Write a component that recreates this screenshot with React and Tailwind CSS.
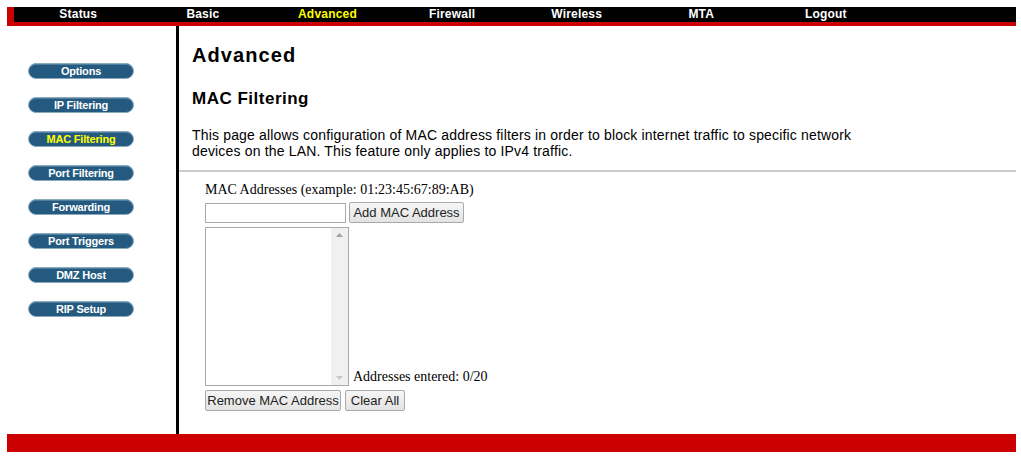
import React from "react";

const navItems = ["Status", "Basic", "Advanced", "Firewall", "Wireless", "MTA", "Logout"];
const sideItems = [
  "Options",
  "IP Filtering",
  "MAC Filtering",
  "Port Filtering",
  "Forwarding",
  "Port Triggers",
  "DMZ Host",
  "RIP Setup",
];

const SideButton = ({ label, active }) => (
  <div className="w-[106px] h-[16px] rounded-full bg-[#245a80] border border-[#8aa9bd] shadow-[inset_0_1px_0_#4f7d9c] flex items-center justify-center">
    <span
      className={`text-[11px] font-bold leading-none tracking-[-0.2px] ${
        active ? "text-[#ffff00]" : "text-white"
      }`}
    >
      {label}
    </span>
  </div>
);

const GreyButton = ({ children, className = "" }) => (
  <button
    className={`h-[21px] px-0 whitespace-nowrap border border-[#a9a9a9] rounded-[2px] text-[13px] text-[#222] leading-none bg-gradient-to-b from-[#f6f6f6] to-[#e3e3e3] ${className}`}
    style={{ fontFamily: "'Liberation Sans', Arial, sans-serif" }}
  >
    {children}
  </button>
);

export default function App() {
  return (
    <div
      className="w-[1021px] h-[460px] bg-white pl-[7px] pr-[5px] pt-[7px]"
      style={{ fontFamily: "'Liberation Sans', Arial, sans-serif" }}
    >
      {/* top nav */}
      <div className="h-[19px] bg-[#cc0000] pl-[7px] pb-[4px]">
        <div className="h-[15px] bg-black flex pl-[2px]">
          {navItems.map((item) => (
            <div
              key={item}
              className={`w-[124.6px] text-center text-[12px] font-bold leading-[15px] tracking-[0.2px] ${
                item === "Advanced" ? "text-[#ffff00]" : "text-white"
              }`}
            >
              {item}
            </div>
          ))}
        </div>
      </div>

      {/* body */}
      <div className="flex h-[408px]">
        <div className="w-[172px] border-r-[3px] border-black pl-[21px] pt-[37px] flex flex-col gap-[18px] shrink-0">
          {sideItems.map((item) => (
            <SideButton key={item} label={item} active={item === "MAC Filtering"} />
          ))}
        </div>

        <div className="flex-1">
          <div className="pl-[13px] pt-[17px]">
            <h1 className="text-[20px] font-bold text-black leading-[24px] tracking-[1.1px]">
              Advanced
            </h1>
            <h2 className="text-[17px] font-bold text-black leading-[20px] mt-[22px] tracking-[0.5px]">
              MAC Filtering
            </h2>
            <p className="text-[14px] text-black leading-[16px] mt-[18px] w-[680px] tracking-[0.17px]">
              This page allows configuration of MAC address filters in order to block internet traffic to specific network devices on the LAN. This feature only applies to IPv4 traffic.
            </p>
          </div>
          <div className="h-[2px] bg-[#cccccc] mt-[11px]" />

          <div
            className="pl-[26px] pt-[10px]"
            style={{ fontFamily: "'Liberation Serif', 'Times New Roman', serif" }}
          >
            <div className="text-[14px] leading-[16px] text-black">
              MAC Addresses (example: 01:23:45:67:89:AB)
            </div>
            <div className="flex items-center gap-[3px] mt-[4px]">
              <input
                type="text"
                className="w-[141px] h-[20px] border border-[#a9a9a9] bg-white outline-none"
              />
              <GreyButton className="w-[115px]">Add MAC Address</GreyButton>
            </div>
            <div className="flex items-end mt-[4px]">
              <div className="w-[144px] h-[159px] border border-[#a9a9a9] bg-white flex justify-end">
                <div className="w-[17px] h-full bg-[#f0f0f0] flex flex-col items-center justify-between py-[5px]">
                  <svg width="7" height="4" viewBox="0 0 7 4">
                    <path d="M0 4 L3.5 0 L7 4 Z" fill="#a3a3a3" />
                  </svg>
                  <svg width="7" height="4" viewBox="0 0 7 4">
                    <path d="M0 0 L3.5 4 L7 0 Z" fill="#c8c8c8" />
                  </svg>
                </div>
              </div>
              <span className="text-[14px] leading-[16px] text-black ml-[4px] mb-[1px]">
                Addresses entered: 0/20
              </span>
            </div>
            <div className="flex gap-[4px] mt-[4px]">
              <GreyButton className="w-[136px]">Remove MAC Address</GreyButton>
              <GreyButton className="w-[60px]">Clear All</GreyButton>
            </div>
          </div>
        </div>
      </div>

      {/* bottom bar */}
      <div className="h-[18px] bg-[#cc0000]" />
    </div>
  );
}
